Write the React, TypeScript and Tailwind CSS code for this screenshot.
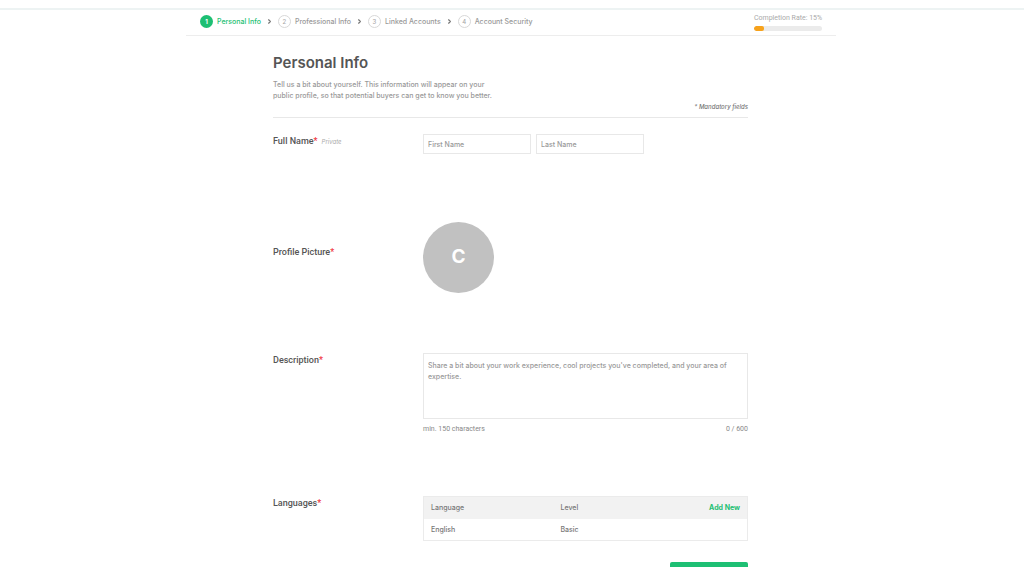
import { Fragment, type ReactNode } from "react";
import { ChevronRight } from "lucide-react";

const steps = ["Personal Info", "Professional Info", "Linked Accounts", "Account Security"];

function Star() {
  return <span className="text-[#f0343c]">*</span>;
}

function Stepper() {
  return (
    <nav aria-label="Profile steps">
      <ol className="flex items-center">
        {steps.map((step, i) => (
          <Fragment key={step}>
            {i > 0 && (
              <li aria-hidden="true" className="flex w-[17px] justify-center">
                <ChevronRight className="size-[7px] text-[#777]" strokeWidth={4} />
              </li>
            )}
            <li>
              <a
                href={`#step-${i + 1}`}
                className={
                  i === 0
                    ? "flex items-center gap-1 font-medium text-[#1dbf73]"
                    : "flex items-center gap-1 font-medium text-[#999]"
                }
              >
                <span
                  className={
                    i === 0
                      ? "flex size-[13px] items-center justify-center rounded-full bg-[#1dbf73] text-[6px] font-bold text-white"
                      : "flex size-[13px] items-center justify-center rounded-full border border-[#d8d8d8] text-[6px] text-[#aaa]"
                  }
                >
                  {i + 1}
                </span>
                {step}
              </a>
            </li>
          </Fragment>
        ))}
      </ol>
    </nav>
  );
}

function Label({ htmlFor, children }: { htmlFor: string; children: ReactNode }) {
  return (
    <label
      htmlFor={htmlFor}
      className="font-['Roboto','Liberation_Sans',sans-serif] text-[9px] leading-[14px] font-medium text-[#555]"
    >
      {children}
      <Star />
    </label>
  );
}

export default function App() {
  return (
    <div className="min-h-screen bg-white pt-2 pr-[2px] font-['Inter','Liberation_Sans',sans-serif] text-[7px] leading-[11px] text-[#888]">
      <div className="-mr-[2px] h-[2px] bg-[#edf3f3]" />
      <header className="mx-auto flex h-[26px] max-w-[650px] items-start justify-between border-b border-[#ededed] pt-[5px] pr-[14px] pl-[14px]">
        <Stepper />
        <div className="-mt-[2px] w-[68px] font-['Roboto','Liberation_Sans',sans-serif]">
          <p className="whitespace-nowrap text-[#aaa]">Completion Rate: 15%</p>
          <div className="mt-[2px] h-[5px] overflow-hidden rounded-full bg-[#ebebeb]">
            <div className="h-full w-[15%] rounded-xs bg-[#f7a21b]" />
          </div>
        </div>
      </header>

      <main className="mx-auto max-w-[476px] pr-px">
        <section className="border-b border-[#e8e8e8] pt-[17px] pb-[5px]">
          <h1 className="text-[15px] leading-[20px] font-semibold text-[#555]">Personal Info</h1>
          <p className="mt-[6px] w-[240px] font-medium text-[#999]">
            Tell us a bit about yourself. This information will appear on your
            <br />
            public profile, so that potential buyers can get to know you better.
          </p>
          <p className="text-right text-[6px] font-medium text-[#777] italic">* Mandatory fields</p>
        </section>

        <form>
          <div className="mt-4 flex">
            <div className="w-[150px] shrink-0">
              <Label htmlFor="first-name">Full Name</Label>
              <span className="ml-1 text-[6px] text-[#aaa] italic">Private</span>
            </div>
            <div className="flex gap-[5px]">
              <input
                id="first-name"
                placeholder="First Name"
                className="h-5 w-[108px] border border-[#e8e8e8] px-1 font-medium placeholder:text-[#999]"
              />
              <input
                aria-label="Last Name"
                placeholder="Last Name"
                className="h-5 w-[108px] border border-[#e8e8e8] px-1 font-medium placeholder:text-[#999]"
              />
            </div>
          </div>

          <div className="mt-[68px] flex">
            <div className="w-[150px] shrink-0 pt-[23px]">
              <Label htmlFor="picture">Profile Picture</Label>
            </div>
            <button
              id="picture"
              type="button"
              className="flex size-[71px] items-center justify-center rounded-full bg-[#c1c1c1] pb-[2px] text-[19px] font-bold text-white"
            >
              C
            </button>
          </div>

          <div className="mt-[60px] flex">
            <div className="w-[150px] shrink-0">
              <Label htmlFor="description">Description</Label>
            </div>
            <div className="flex-1">
              <textarea
                id="description"
                placeholder="Share a bit about your work experience, cool projects you've completed, and your area of expertise."
                className="block h-[66px] w-full resize-none border border-[#e8e8e8] px-1 py-[6px] font-medium placeholder:text-[#999]"
              />
              <div className="mt-[5px] flex justify-between font-['Roboto','Liberation_Sans',sans-serif]">
                <span>min. 150 characters</span>
                <span>0 / 600</span>
              </div>
            </div>
          </div>

          <div className="mt-[61px] flex">
            <div className="w-[150px] shrink-0">
              <span className="font-['Roboto','Liberation_Sans',sans-serif] text-[9px] leading-[14px] font-medium text-[#555]">
                Languages
                <Star />
              </span>
            </div>
            <div className="flex-1">
              <table
                className="w-full table-fixed border-collapse border border-[#ebebeb] text-left font-medium text-[#777]"
                aria-label="Languages"
              >
                <thead className="bg-[#f2f2f2]">
                  <tr className="h-[22px]">
                    <th className="w-[137px] pl-[7px] font-medium">Language</th>
                    <th className="font-medium">Level</th>
                    <th className="w-[60px] pr-[7px] text-right">
                      <button type="button" className="font-bold text-[#1dbf73]">
                        Add New
                      </button>
                    </th>
                  </tr>
                </thead>
                <tbody>
                  <tr className="h-[22px]">
                    <td className="pl-[7px]">English</td>
                    <td>Basic</td>
                    <td />
                  </tr>
                </tbody>
              </table>
            </div>
          </div>

          <div className="mt-[21px] flex justify-end">
            <button
              type="submit"
              aria-label="Continue"
              className="h-6 w-[78px] rounded-[2px] bg-[#1dbf73]"
            />
          </div>
        </form>
      </main>
    </div>
  );
}
